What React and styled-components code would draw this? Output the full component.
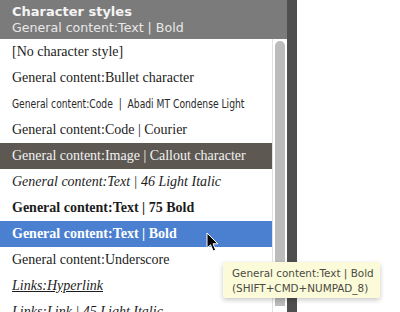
import React from "react";
import styled, { createGlobalStyle, css } from "styled-components";

const Global = createGlobalStyle`
  html, body { margin: 0; padding: 0; background: #ffffff; }
  body { width: 400px; height: 312px; overflow: hidden; }
`;

const Screen = styled.div`
  position: relative;
  width: 400px;
  height: 312px;
  display: flex;
  overflow: hidden;
  background: #ffffff;
`;

const Panel = styled.div`
  flex: 0 0 287px;
  min-width: 0;
  display: flex;
  flex-direction: column;
  background: #ffffff;
  overflow: hidden;
`;

const Header = styled.div`
  height: 39px;
  box-sizing: border-box;
  padding: 3px 0 0 12px;
  background: #7b7b7b;
  font-family: "DejaVu Sans", sans-serif;
  display: flex;
  flex-direction: column;
`;

const Title = styled.div`
  font-size: 13px;
  font-weight: bold;
  color: #f4f4f4;
  line-height: 17px;
`;

const Subtitle = styled.div`
  font-size: 12.6px;
  color: #e8e8e8;
  line-height: 15px;
`;

const Body = styled.div`
  flex: 1;
  display: flex;
  min-height: 0;
`;

const List = styled.div`
  flex: 1;
  min-width: 0;
  overflow: hidden;
  display: flex;
  flex-direction: column;
`;

const Track = styled.div`
  flex: 0 0 13px;
  border-left: 1px solid #e2e2e2;
  padding: 2px 2px 0 2px;
  box-sizing: border-box;
  display: flex;
  justify-content: flex-start;
`;

const Thumb = styled.div`
  width: 10px;
  height: 265px;
  border-radius: 5px 5px 0 0;
  background: #bcbcbc;
`;

const Strip = styled.div`
  flex: 0 0 10px;
  background: #4f4f4f;
`;

const Row = styled.div`
  height: 26px;
  flex-shrink: 0;
  display: flex;
  align-items: center;
  padding-left: 12px;
  font-family: "Liberation Serif", "Times New Roman", serif;
  font-size: 14px;
  color: #1c1c1c;
  white-space: nowrap;
  ${(p) => p.$italic && css`font-style: italic;`}
  ${(p) => p.$bold && css`font-weight: bold;`}
  ${(p) => p.$underline && css`text-decoration: underline;`}
  ${(p) =>
    p.$variant === "dark" &&
    css`
      background: #5d5852;
      color: #f2f2f2;
    `}
  ${(p) =>
    p.$variant === "selected" &&
    css`
      background: #4a80cf;
      color: #ffffff;
    `}
`;

const Condensed = styled.span`
  display: inline-block;
  flex-shrink: 0;
  font-family: "DejaVu Sans", sans-serif;
  font-stretch: condensed;
  font-size: 12px;
  color: #2a2a2a;
  transform: scaleX(0.85);
  transform-origin: left center;
`;

const Tooltip = styled.div`
  position: absolute;
  left: 223px;
  top: 262px;
  width: 157px;
  height: 36px;
  box-sizing: border-box;
  padding: 4px 0 0 9px;
  background: #fbfbd9;
  border-radius: 2px;
  box-shadow: 0 2px 5px rgba(0, 0, 0, 0.22);
  font-family: "DejaVu Sans", sans-serif;
  font-size: 10.4px;
  line-height: 15px;
  color: #4a4a44;
  white-space: nowrap;
`;

const Cursor = styled.svg`
  position: absolute;
  left: 206px;
  top: 232px;
`;

const rows = [
  { text: "[No character style]" },
  { text: "General content:Bullet character" },
  { text: "General content:Code  |  Abadi MT Condense Light", condensed: true },
  { text: "General content:Code | Courier" },
  { text: "General content:Image | Callout character", variant: "dark" },
  { text: "General content:Text | 46 Light Italic", italic: true },
  { text: "General content:Text | 75 Bold", bold: true },
  { text: "General content:Text | Bold", bold: true, variant: "selected" },
  { text: "General content:Underscore" },
  { text: "Links:Hyperlink", italic: true, underline: true },
  { text: "Links:Link | 45 Light Italic", italic: true },
];

export default function App() {
  return (
    <Screen>
      <Global />
      <Panel>
        <Header>
          <Title>Character styles</Title>
          <Subtitle>General content:Text | Bold</Subtitle>
        </Header>
        <Body>
          <List>
            {rows.map((r, i) => {
              const label = r.text.replace(/ {2}/g, "\u00a0 ");
              return (
                <Row
                  key={i}
                  $italic={r.italic}
                  $bold={r.bold}
                  $underline={r.underline}
                  $variant={r.variant}
                >
                  {r.condensed ? <Condensed>{label}</Condensed> : label}
                </Row>
              );
            })}
          </List>
          <Track>
            <Thumb />
          </Track>
        </Body>
      </Panel>
      <Strip />
      <Tooltip>
        <div>General content:Text | Bold</div>
        <div>(SHIFT+CMD+NUMPAD_8)</div>
      </Tooltip>
      <Cursor width="13" height="21" viewBox="0 0 13 21">
        <path
          d="M1 1 L1 16 L4.5 12.8 L7.2 19 L9.6 18 L7 11.8 L11.8 11.8 Z"
          fill="#000"
          stroke="#fff"
          strokeWidth="1"
          strokeLinejoin="round"
        />
      </Cursor>
    </Screen>
  );
}
